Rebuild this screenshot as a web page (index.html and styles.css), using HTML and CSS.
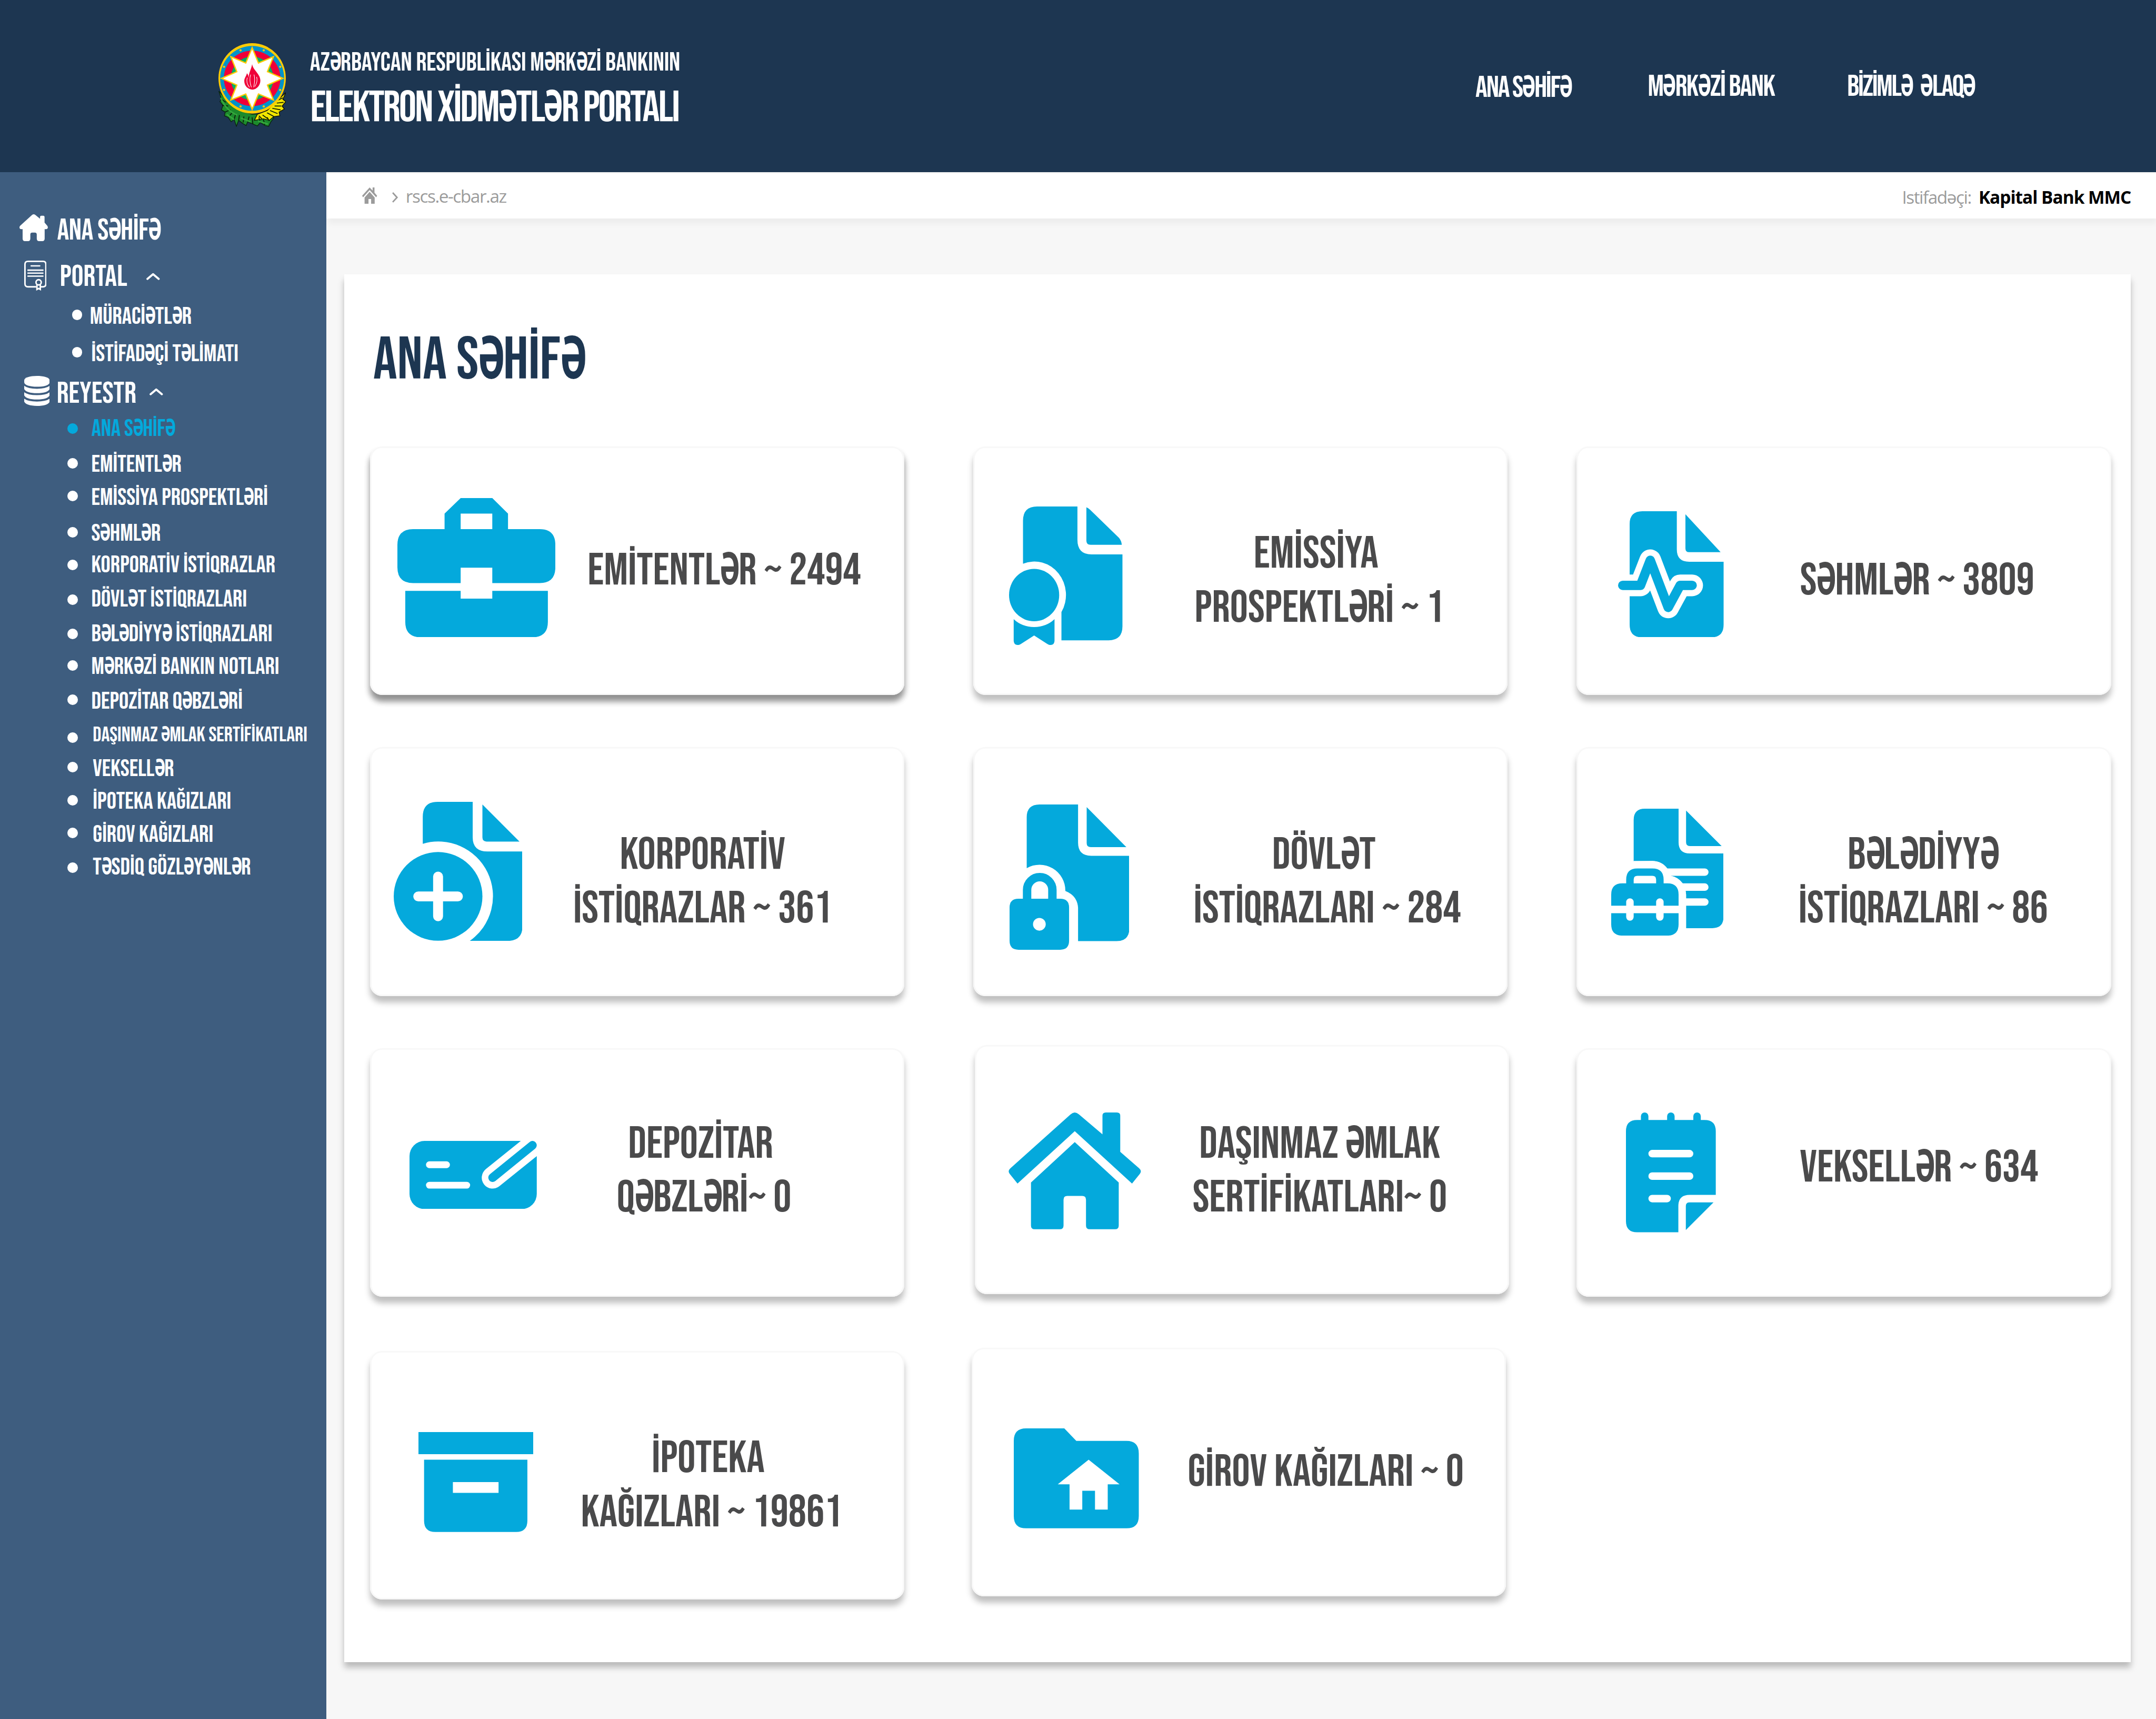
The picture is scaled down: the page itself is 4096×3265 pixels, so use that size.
FILE: index.html
```html
<!DOCTYPE html>
<html lang="az">
<head>
<meta charset="utf-8">
<title>Elektron Xidmətlər Portalı</title>
<link rel="stylesheet" href="styles.css">
</head>
<body>
<header class="header">
  <svg class="emblem" viewBox="0 0 180 223">
    <path fill="#1c8a2c" stroke="#0a2410" stroke-width="2" d="M1 128 L8 150 4 156 12 166 8 178 18 184 16 194 26 198 34 210 42 204 48 222 54 206 64 214 74 220 78 210 92 216 104 221 112 212 124 220 134 222 140 210 148 200 140 190 120 188 90 190 60 180 30 160Z"/>
    <path fill="#f2e500" stroke="#141400" stroke-width="2" d="M180 132 L172 150 180 156 170 168 176 176 162 184 164 194 148 196 136 206 120 202 96 206 104 190 130 180 150 160Z"/>
    <g fill="none" stroke="#0a1a0a" stroke-width="2.4">
      <path d="M8 150l12 8M10 166l16 2M18 184l14-6M28 196l10-12M42 204l4-16M54 206l2-14M66 212l2-16M78 210l4-14M92 216l-2-18M112 212l-4-14M124 218l-4-14M136 208l-6-10"/>
      <path d="M172 146l-12 6M174 158l-18 2M168 168l-18 0M166 178l-22-4M158 188l-20-8M148 196l-18-10M132 202l-14-10M116 202l-8-8"/>
    </g>
    <path fill="none" stroke="#35a83c" stroke-width="4" d="M6 146q14 34 44 46M22 190l20 14M60 200l26 10M106 208l26 8"/>
    <ellipse cx="90" cy="94" rx="90" ry="94" fill="#ffcb05"/>
    <ellipse cx="90" cy="94" rx="85.500" ry="86.500" fill="#0093c9"/>
    <ellipse cx="90" cy="94" rx="75.500" ry="74" fill="#ef0038"/>
    <ellipse cx="90" cy="94" rx="57" ry="58.500" fill="#00ae65"/>
    <g fill="#ffcb05"><circle cx="59" cy="19" r="3"/><circle cx="121" cy="19" r="3"/><circle cx="59" cy="169" r="3"/><circle cx="121" cy="169" r="3"/><circle cx="15" cy="63" r="3"/><circle cx="165" cy="63" r="3"/><circle cx="15" cy="125" r="3"/><circle cx="165" cy="125" r="3"/></g>
    <path fill="#fff" stroke="#ffcb05" stroke-width="3.500" d="M90 12L107 53 147 36 131 76 172 94 131 112 147 152 107 136 90 177 73 136 33 152 49 112 8 94 49 76 33 36 73 53Z"/>
    <path fill="#ef0038" d="M90 56C92 72 112 82 112 100C112 113 102 124 91 124C79 124 69 114 69 101C69 92 75 88 76 80C80 84 80 88 81 92C81 78 88 70 90 56Z"/>
    <path fill="none" stroke="#fff" stroke-width="1.500" d="M77 92c-3 10 1 20 6 26M86 84c-4 14-1 26 2 34M95 84c4 14 1 24-1 34M102 90c3 10-1 20-5 26"/>
  </svg>
  <div class="brand">
    <div class="brand-sub az">AZƏRBAYCAN RESPUBLİKASI MƏRKƏZİ BANKININ</div>
    <div class="brand-name az">ELEKTRON XİDMƏTLƏR PORTALI</div>
  </div>
  <nav class="topnav">
    <a class="topnav-home az">ANA SƏHİFƏ</a>
    <a class="topnav-bank az">MƏRKƏZİ BANK</a>
    <a class="topnav-contact az">BİZİMLƏ&nbsp; ƏLAQƏ</a>
  </nav>
</header>
<div class="layout">
  <aside class="sidebar">
    <div class="section section-home">
      <svg class="ico ico-home" viewBox="0 0 76 72"><path fill="#fff" d="M34 1.500Q38 -1.500 42 1.500L55 12V7Q55 3.700 58.500 3.700H63.500Q67 3.700 67 7V22L74.500 31Q76 33.500 75.800 36Q75 39.800 71 39.800H67.300V65Q67.300 71.600 61 71.600H52.500Q46.200 71.600 46.200 65V54Q46.200 49 41 49H34Q29 49 29 54V65Q29 71.600 23 71.600H14.500Q8.400 71.600 8.400 65V39.800H4Q.5 39.500 0 36Q0 33 1.500 31Z"/></svg>
      <span class="az">ANA SƏHİFƏ</span>
    </div>
    <div class="section section-portal">
      <svg class="ico ico-cert" viewBox="0 0 60 80">
        <g fill="none" stroke="#fff">
          <path stroke-width="4" d="M32 70H10Q2 70 2 62V10Q2 2 10 2H50Q58 2 58 10V62Q58 70 50 70H45"/>
          <path stroke-width="3.600" stroke-linecap="round" d="M18.500 14H41.500M10 25.500H50M10 33.500H50M10 41.500H50"/>
          <circle cx="38.500" cy="58" r="7" stroke-width="4"/>
          <path stroke-width="4" d="M34 64V77L38.500 74.500 43 77V64"/>
        </g>
      </svg>
      <span>PORTAL</span>
      <svg class="chev" viewBox="0 0 36 20"><path fill="none" stroke="#fff" stroke-width="5.500" stroke-linecap="round" stroke-linejoin="round" d="M3 16.500L18 4 33 16.500"/></svg>
    </div>
    <ul class="menu menu-portal">
      <li class="az">MÜRACİƏTLƏR</li>
      <li class="az">İSTİFADƏÇİ TƏLİMATI</li>
    </ul>
    <div class="section section-reyestr">
      <svg class="ico ico-db" viewBox="0 0 68 80"><g fill="#fff"><path d="M0 12C0 4 16 0 34 0S68 4 68 12V17C68 25 52 29 34 29S0 25 0 17Z"/><path d="M0 26.500Q10 34.500 34 34.500T68 26.500V35Q62 46 34 46T0 35Z"/><path d="M0 43.500Q10 51.500 34 51.500T68 43.500V52Q62 63 34 63T0 52Z"/><path d="M0 61Q10 68.500 34 68.500T68 61V69Q62 80 34 80T0 69Z"/></g></svg>
      <span>REYESTR</span>
      <svg class="chev" viewBox="0 0 36 20"><path fill="none" stroke="#fff" stroke-width="5.500" stroke-linecap="round" stroke-linejoin="round" d="M3 16.500L18 4 33 16.500"/></svg>
    </div>
    <ul class="menu menu-reyestr">
      <li class="az active">ANA SƏHİFƏ</li>
      <li class="az">EMİTENTLƏR</li>
      <li class="az">EMİSSİYA PROSPEKTLƏRİ</li>
      <li class="az">SƏHMLƏR</li>
      <li class="az low">KORPORATİV İSTİQRAZLAR</li>
      <li class="az low">DÖVLƏT İSTİQRAZLARI</li>
      <li class="az low">BƏLƏDİYYƏ İSTİQRAZLARI</li>
      <li class="az">MƏRKƏZİ BANKIN NOTLARI</li>
      <li class="az">DEPOZİTAR QƏBZLƏRİ</li>
      <li class="az small">DAŞINMAZ ƏMLAK SERTİFİKATLARI</li>
      <li class="az wide">VEKSELLƏR</li>
      <li class="az wide">İPOTEKA KAĞIZLARI</li>
      <li class="az wide">GİROV KAĞIZLARI</li>
      <li class="az wide low">TƏSDİQ GÖZLƏYƏNLƏR</li>
    </ul>
  </aside>
  <main class="content">
    <div class="crumbs">
      <svg class="crumb-home" viewBox="0 0 40 44"><g fill="#9b9b9b"><path d="M20 0L28 8.500V0H33V14L40 22 37.500 26.500 20 7 2.500 26.500 0 22Z"/><path d="M20 11.500L33.500 27V44H24V31H17V44H6.500V27Z"/></g></svg>
      <svg class="crumb-sep" viewBox="0 0 16 28"><path fill="none" stroke="#9b9b9b" stroke-width="4" d="M1.500 1.500L13 14 1.500 26.500"/></svg>
      <span class="crumb-text">rscs.e-cbar.az</span>
      <span class="user-label">Istifadəçi:</span>
      <span class="user-name">Kapital Bank MMC</span>
    </div>
    <section class="panel">
      <h1 class="title az">ANA SƏHİFƏ</h1>
      <div class="grid">
        <article class="card card-emitent">
          <svg viewBox="0 0 422 372"><path fill="#04a9dc" fill-rule="evenodd" d="M126 83V41.500L169 0H253.500L295.500 41.500V83H380Q422 83 422 125V185Q422 227 380 227H253.500V186H169V227H42Q0 227 0 185V125Q0 83 42 83ZM169 41.500V83H253.500V41.500ZM21 248H169V268.500H253.500V248H402V331Q402 372 360 372H63Q21 372 21 331Z"/></svg>
          <div class="label az">EMİTENTLƏR ~ 2494</div>
        </article>
        <article class="card card-emissiya">
          <svg viewBox="0 0 303 370"><g fill="#04a9dc"><path d="M37.300 153V38Q37.300 0 75 0H182.700V89Q182.700 128 220 128H303V320Q303 357.500 266 357.500H140V282A84.500 89 0 0 0 37.300 153Z"/><path d="M206.600 2Q212 4 217 9L294 84Q300 91 301.300 102.400H218Q206.600 102.400 206.600 91Z"/><ellipse cx="67" cy="236.500" rx="67" ry="70"/><path d="M12.400 301Q35 322 67 322T121.500 301V359Q121 370 110 370Q106 370 102 367L67 344.600 32 367Q28 370 24 370Q13 370 12.400 359Z"/></g></svg>
          <div class="label az">EMİSSİYA<br>PROSPEKTLƏRİ ~ 1</div>
        </article>
        <article class="card card-sehm">
          <svg viewBox="0 0 282 337"><path fill="#04a9dc" d="M31 34Q31 0 65 0H157V102Q157 135 190 135H282V303Q282 337 248 337H65Q31 337 31 303ZM180 8L274 109.500H190Q180 109.500 180 99Z"/><g fill="none" stroke-linejoin="round" stroke-linecap="round"><path stroke="#fff" stroke-width="58" d="M-10 198H60L86 131 134 257 166 198H198"/><path stroke="#04a9dc" stroke-width="25" d="M12.500 198H60L86 131 134 257 166 198H198"/></g></svg>
          <div class="label az">SƏHMLƏR ~ 3809</div>
        </article>
        <article class="card card-korporativ">
          <svg viewBox="0 0 344 371.500"><g fill="#04a9dc"><path d="M77.600 112V40Q77.600 0 117 0H211V95Q211 132.700 251 132.700H344V331.500Q344 371.500 304 371.500H203A146 146 0 0 0 77.600 112Z"/><path d="M237 7L336 106H248Q237 106 237 95Z"/><circle cx="118.500" cy="252.500" r="118.500"/></g><path stroke="#fff" stroke-width="26.500" stroke-linecap="round" d="M65.500 252.500H171.500M118.500 199.500V305.500"/></svg>
          <div class="label az">KORPORATİV<br>İSTİQRAZLAR ~ 361</div>
        </article>
        <article class="card card-dovlet">
          <svg viewBox="0 0 320 388"><g fill="#04a9dc"><path d="M45.800 170V34Q45.800 0 80 0H183V102Q183 137 218 137H320V331Q320 365 286 365H183V276Q181 244 149 231A69 69 0 0 0 45.800 170Z"/><path d="M206 7L312 114H217Q206 114 206 103Z"/><path fill-rule="evenodd" d="M24 251.600H135Q159 251.600 159 275V364Q159 388 135 388H24Q0 388 0 364V275Q0 251.600 24 251.600ZM79.600 303A17 17 0 1 0 79.600 337A17 17 0 1 0 79.600 303Z"/></g><path fill="none" stroke="#04a9dc" stroke-width="22.500" d="M46.800 256V228A33.800 33.800 0 0 1 114.400 228V256"/></svg>
          <div class="label az">DÖVLƏT<br>İSTİQRAZLARI ~ 284</div>
        </article>
        <article class="card card-belediyye">
          <svg viewBox="0 0 15 17" preserveAspectRatio="none"><path fill="#04a9dc" d="M3 7.050V1.500Q3 0 4.500 0H9V4.500Q9 6 10.500 6H15V14.500Q15 16 13.500 16H10V11.500Q9.700 9.400 7.950 9L7.500 8Q6.800 7.050 5.500 7ZM10 .25L14.750 5H10.500Q10 5 10 4.500Z"/><path fill="none" stroke="#fff" stroke-linecap="round" d="M7 8.500H12.500M9 10.500H12.500M9.500 12.500H12.500"/><path fill="#fff" d="M3 7H5.500Q6.800 7 7.500 8.100L8 9Q8.900 9.150 9.560 10 10 10.700 10 11.500V17H3Z"/><path fill="#04a9dc" fill-rule="evenodd" d="M2 10V9.500Q2 8 3.500 8H5.500Q7 8 7 9.500V10H7.500Q9 10 9 11.500V13H7V12.500A.5 .5 0 0 0 6 12.500V13H3V12.500A.5 .5 0 0 0 2 12.500V13H0V11.500Q0 10 1.500 10ZM3 10H6V9.500Q6 9 5.500 9H3.500Q3 9 3 9.500ZM0 14H2V14.500A.5 .5 0 0 0 3 14.500V14H6V14.500A.5 .5 0 0 0 7 14.500V14H9V15.500Q9 17 7.500 17H1.500Q0 17 0 15.500Z"/></svg>
          <div class="label az">BƏLƏDİYYƏ<br>İSTİQRAZLARI ~ 86</div>
        </article>
        <article class="card card-depozitar">
          <svg viewBox="0 0 17 9" preserveAspectRatio="none"><rect width="17" height="9" rx="2" fill="#04a9dc"/><path stroke="#fff" stroke-width=".9" stroke-linecap="round" d="M2.650 3.150H4.950M2.650 5.850H7.650"/><g fill="none" stroke-linecap="round"><path stroke="#fff" stroke-width="2.900" d="M11.100 4.850L19 -1.430"/><path stroke="#04a9dc" stroke-width="1.150" d="M11.100 4.850L16.420 .58"/></g></svg>
          <div class="label az">DEPOZİTAR<br>QƏBZLƏRİ~ 0</div>
        </article>
        <article class="card card-dasinmaz">
          <svg viewBox="0 0 354 312"><g fill="#04a9dc"><path d="M166 5Q177 -5 188 5L251 58.500V9Q251 0 260 0H289.500Q298.500 0 298.500 9V105L349 149Q357 156 351 164L330 190 177 50 24 190 3 164Q-3 156 5 149Z"/><path d="M177 79L294.500 187V302Q294.500 312 284.500 312H217Q207 312 207 302V233Q207 223 197 223H157Q147 223 147 233V302Q147 312 137 312H70Q60 312 60 302V187Z"/></g></svg>
          <div class="label az">DAŞINMAZ ƏMLAK<br>SERTİFİKATLARI~ 0</div>
        </article>
        <article class="card card-veksel">
          <svg viewBox="0 0 12 16"><path fill="#04a9dc" d="M2 1V.5A.5 .5 0 0 1 3 .5V1H5.500V.5A.5 .5 0 0 1 6.500 .5V1H9V.5A.5 .5 0 0 1 10 .5V1H10.500Q12 1 12 2.500V11H8.500Q7 11 7 12.500V16H1.500Q0 16 0 14.500V2.500Q0 1 1.500 1ZM8 15.700V12.500Q8 12 8.500 12H11.700Z"/><path stroke="#fff" stroke-linecap="round" d="M3.500 5.500H8.500M3.500 8.500H8.500M3.500 11.500H5.500"/></svg>
          <div class="label az">VEKSELLƏR ~ 634</div>
        </article>
        <article class="card card-ipoteka">
          <svg viewBox="0 0 307 267"><path fill="#04a9dc" fill-rule="evenodd" d="M0 0H307V59H0ZM15 74H291V237Q291 267 261 267H45Q15 267 15 237ZM92 133.500V162.500H214V133.500Z"/></svg>
          <div class="label">İPOTEKA<br>KAĞIZLARI ~ 19861</div>
        </article>
        <article class="card card-girov">
          <svg viewBox="0 0 334 267"><path fill="#04a9dc" fill-rule="evenodd" d="M33 0H135L167 33.500H301Q334 33.500 334 67V234Q334 267 301 267H33Q0 267 0 234V33Q0 0 33 0ZM200 83.600L117.500 149.400H149V217H183V166.500H217V217H251V149.400H282.600Z"/></svg>
          <div class="label">GİROV KAĞIZLARI ~ 0</div>
        </article>
      </div>
    </section>
  </main>
</div>
<script src="schwa.js"></script>
</body>
</html>
```
FILE: styles.css
```css
/* 1rem is 1/57.6 of the page width */
html { font-size: calc(100vw / 57.6); }
* { box-sizing: border-box; }
body {
  margin: 0;
  height: 100vh;
  overflow: hidden;
  display: flex;
  flex-direction: column;
  background: #f7f7f7;
  font-family: "Bebas Neue", "Roboto Condensed", sans-serif;
  font-weight: 400;
  line-height: 1.2;
  white-space: nowrap;
}
svg { display: block; flex: none; overflow: hidden; }

/* The display face has no schwa, so it is set condensed from Roboto */
.schwa {
  display: inline-block;
  width: .41em;
  line-height: 0;
  font-family: "Roboto Condensed", sans-serif;
  font-weight: 700;
  letter-spacing: 0;
  text-indent: 0;
  transform: scaleX(.74);
  transform-origin: 0 100%;
}

.header {
  flex: none;
  height: 4.6rem;
  background: #1d3651;
  color: #fff;
  display: flex;
  align-items: flex-start;
  padding-left: 5.84rem;
}
.emblem { width: 1.8rem; height: 2.23rem; margin-top: 1.16rem; }
.brand { width: 10.5rem; margin: 1.27rem 0 0 .64rem; }
.brand-sub { font-size: .7rem; line-height: .84rem; letter-spacing: -.0035em; }
.brand-name { font-size: 1.16rem; line-height: 1.39rem; letter-spacing: -.0345em; margin: .1rem 0 0 .01rem; }
.topnav { display: flex; font-size: .8rem; letter-spacing: -.03em; margin: 1.84rem 0 0 auto; padding-right: 4.83rem; }
.topnav-home { margin-top: .03rem; letter-spacing: -.04em; }
.topnav-bank { margin-left: 2.03rem; }
.topnav-contact { margin-left: 1.94rem; letter-spacing: -.041em; }

.layout { flex: 1; display: flex; min-height: 0; }
.sidebar { flex: none; width: 8.72rem; background: #3e5d7f; color: #fff; padding-top: 1.08rem; }
.section { display: flex; align-items: flex-start; height: .96rem; font-size: .8rem; }
.section-home { padding-left: .52rem; gap: .245rem; letter-spacing: -.009em; }
.section-portal { padding-left: .64rem; margin-top: .28rem; gap: .36rem; }
.section-reyestr { padding-left: .64rem; margin-top: .208rem; gap: .195rem; }
.ico-home { width: .76rem; height: .72rem; margin-top: .04rem; }
.ico-cert { width: .6rem; height: .8rem; margin-top: .04rem; }
.ico-db { width: .68rem; height: .8rem; }
.chev { width: .36rem; height: .2rem; margin-top: .36rem; }
.section-portal .chev { margin-left: .15rem; }
.section-reyestr .chev { margin: .32rem 0 0 .16rem; }

.menu { list-style: none; margin: 0; padding: 0 0 0 1.8rem; display: grid; font-size: .64rem; }
.menu-portal { padding-left: 1.92rem; margin-top: .2rem; margin-bottom: -.016rem; grid-template-rows: 1rem .768rem; }
.menu-reyestr {
  margin-top: .08rem;
  grid-template-rows: .96rem .88rem .96rem .84rem .92rem .92rem .88rem .92rem .88rem .92rem .88rem .88rem .88rem .77rem;
}
.menu li::before {
  content: "";
  display: inline-block;
  width: .28rem;
  height: .28rem;
  border-radius: 50%;
  background: currentColor;
  margin-right: .36rem;
  vertical-align: .09rem;
}
.menu-portal li::before { margin-right: .2rem; }
.menu-portal li + li::before { margin-right: .24rem; }
.menu .active { color: #04a9dc; letter-spacing: -.006em; }
.menu .active::before { margin-right: .365rem; vertical-align: .05rem; }
.menu .low::before { vertical-align: .05rem; }
.menu .wide::before { margin-right: .4rem; }
.menu .small { font-size: .56rem; padding-top: .075rem; }
.menu .small::before { margin-right: .4rem; vertical-align: -.03rem; }

.content { flex: 1; padding-top: .04rem; }
.crumbs {
  display: flex;
  align-items: flex-start;
  height: 1.2rem;
  background: #fff;
  box-shadow: .04rem .16rem .16rem rgba(0, 0, 0, .045);
  padding: 0 .67rem 0 .96rem;
  font: 400 .47rem/.64rem "Open Sans", sans-serif;
  color: #9b9b9b;
}
.crumb-home { width: .4rem; height: .44rem; margin-top: .36rem; }
.crumb-sep { width: .16rem; height: .28rem; margin: .49rem 0 0 .4rem; }
.crumb-text { margin: .28rem 0 0 .2rem; letter-spacing: -.044em; }
.user-label { margin: .31rem .2rem 0 auto; letter-spacing: -.045em; }
.user-name { margin-top: .31rem; font-weight: 700; color: #000; letter-spacing: -.03em; }

.panel {
  width: 47.72rem;
  height: 37.08rem;
  margin: 1.48rem 0 0 .48rem;
  padding: 1.36rem 0 0 .68rem;
  background: #fff;
  box-shadow: 0 .16rem .16rem rgba(0, 0, 0, .25);
}
.title { margin: 0 0 0 .09rem; font-size: 1.6rem; line-height: 1.92rem; font-weight: 400; color: #1d3651; }
.grid {
  display: grid;
  grid-template-columns: repeat(3, 14.28rem);
  grid-template-rows: repeat(4, 6.64rem);
  gap: 1.4rem 1.84rem;
  margin-top: 1.32rem;
}
.card {
  display: grid;
  grid-template-columns: var(--label-x) 7.6rem;
  align-items: start;
  background: #fff;
  border-radius: .32rem;
  box-shadow: inset 0 0 0 .04rem #f8f8f8, 0 .16rem .16rem rgba(0, 0, 0, .25);
}
.label { font-size: 1.2rem; line-height: 1.44rem; text-align: center; color: #4a4a4b; padding-top: .015rem; }

.card-emitent { --label-x: 5.67rem; box-shadow: inset 0 0 0 .04rem #f8f8f8, 0 .16rem .16rem rgba(0, 0, 0, .25), 0 .16rem .16rem rgba(0, 0, 0, .25); }
.card-emitent svg { width: 4.22rem; height: 3.72rem; margin: 1.38rem 0 0 .74rem; }
.card-emitent .label { margin-top: 2.6rem; }
.card-emissiya { --label-x: 5.45rem; }
.card-emissiya svg { width: 3.03rem; height: 3.7rem; margin: 1.61rem 0 0 .96rem; }
.card-emissiya .label { margin-top: 2.16rem; text-indent: -.18rem; }
.card-sehm { --label-x: 5.3rem; }
.card-sehm svg { width: 2.82rem; height: 3.37rem; margin: 1.73rem 0 0 1.11rem; }
.card-sehm .label { margin-top: 2.88rem; }
.card-korporativ { --label-x: 5.09rem; }
.card-korporativ svg { width: 3.44rem; height: 3.715rem; margin: 1.46rem 0 0 .635rem; }
.card-korporativ .label { margin-top: 2.16rem; }
.card-dovlet { --label-x: 5.66rem; }
.card-dovlet svg { width: 3.2rem; height: 3.88rem; margin: 1.53rem 0 0 .97rem; }
.card-dovlet .label { margin-top: 2.16rem; text-indent: -.18rem; }
.card-belediyye { --label-x: 5.46rem; }
.card-belediyye svg { width: 3rem; height: 3.39rem; margin: 1.64rem 0 0 .92rem; }
.card-belediyye .label { margin-top: 2.16rem; }
.card-depozitar { --label-x: 5.13rem; }
.card-depozitar svg { width: 3.4rem; height: 1.82rem; margin: 2.47rem 0 0 1.06rem; }
.card-depozitar .label { margin-top: 1.84rem; text-indent: -.18rem; }
.card-dasinmaz { --label-x: 5.42rem; margin: -.08rem -.04rem .08rem .04rem; }
.card-dasinmaz svg { width: 3.54rem; height: 3.12rem; margin: 1.8rem 0 0 .91rem; }
.card-dasinmaz .label { margin-top: 1.92rem; }
.card-veksel { --label-x: 5.35rem; }
.card-veksel svg { width: 2.4rem; height: 3.2rem; margin: 1.72rem 0 0 1.32rem; }
.card-veksel .label { margin-top: 2.48rem; }
.card-ipoteka { --label-x: 5.33rem; margin: .04rem 0 -.04rem; }
.card-ipoteka svg { width: 3.07rem; height: 2.67rem; margin: 2.17rem 0 0 1.3rem; }
.card-ipoteka .label { margin-top: 2.16rem; text-indent: -.18rem; }
.card-girov { --label-x: 5.66rem; margin: -.04rem .04rem .04rem -.04rem; }
.card-girov svg { width: 3.34rem; height: 2.67rem; margin: 2.15rem 0 0 1.13rem; }
.card-girov .label { margin-top: 2.6rem; }
```
FILE: schwa.js
```js
// Wrap each schwa so that the stylesheet can set it in the fallback face.
document.querySelectorAll('.az').forEach(function (el) {
  el.innerHTML = el.innerHTML.replace(/Ə/g, '<span class="schwa">Ə</span>');
});
```
